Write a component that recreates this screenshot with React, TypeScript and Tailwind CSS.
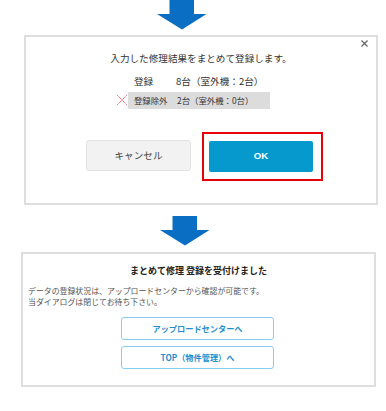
import React from 'react';

const font = { fontFamily: '"Noto Sans CJK JP", "Noto Sans", sans-serif' };

// Blue down arrow between the two dialogs
const DownArrow: React.FC<{ className?: string }> = ({ className }) => (
  <svg className={className} width="50" height="30" viewBox="0 0 50 30">
    <rect x="12.5" y="0" width="24.5" height="14.5" fill="#0a6fc2" />
    <polygon points="0,14 49.5,14 25,29.5" fill="#0a6fc2" />
  </svg>
);

const App: React.FC = () => {
  return (
    <div className="w-[386px] h-[411px] bg-white flex flex-col text-[#333]" style={font}>
      <DownArrow className="ml-[157px] shrink-0" />

      {/* Confirm dialog */}
      <div className="relative mt-[5px] ml-[24px] w-[354px] h-[170px] border-2 border-[#dedede] bg-white flex flex-col">
        <svg className="absolute right-[8px] top-[3px]" width="7" height="7" viewBox="0 0 7 7">
          <path d="M0.5 0.5 L6.5 6.5 M6.5 0.5 L0.5 6.5" stroke="#666" strokeWidth="1.3" />
        </svg>

        <p className="pt-[14px] text-center text-[9.6px] leading-[14px]">入力した修理結果をまとめて登録します。</p>

        <div className="mt-[9px] ml-[102px] flex text-[9.6px] leading-[14px] pl-[6px]">
          <span className="w-[42px]">登録</span>
          <span>8台（室外機：2台）</span>
        </div>

        <div className="relative mt-[4px] ml-[102px] w-[142px] h-[17px] bg-[#dcdcdc] flex items-center pl-[6px] text-[8.4px]">
          <svg className="absolute left-[-11px] top-[3px]" width="10" height="10" viewBox="0 0 10 10">
            <path d="M0.5 0.5 L9.5 9.5 M9.5 0.5 L0.5 9.5" stroke="#e8141b" strokeWidth="1" strokeDasharray="1 1" />
          </svg>
          <span className="w-[43px]">登録除外</span>
          <span>2台（室外機：0台）</span>
        </div>

        <div className="mt-[23px] pl-[60px] flex items-start gap-[11px]">
          <button className="mt-[8px] w-[105px] h-[31px] rounded-[3px] bg-[#f2f2f2] border border-[#e2e2e2] text-[9.6px] text-[#444]">
            キャンセル
          </button>
          <div className="border-2 border-[#e8000b] pl-[5px] pt-[6px] pr-[8px] pb-[7px]">
            <button className="w-[104px] h-[31px] rounded-[2px] bg-[#0699cd] text-white text-[9.6px] font-bold" style={{ fontFamily: '"Liberation Sans", "Noto Sans CJK JP", sans-serif' }}>
              OK
            </button>
          </div>
        </div>
      </div>

      <DownArrow className="mt-[11px] ml-[160px] shrink-0" />

      {/* Accepted dialog */}
      <div className="mt-[6px] ml-[21px] w-[355px] h-[135px] border-2 border-[#dedede] bg-white flex flex-col">
        <p className="pt-[10px] text-center text-[9px] leading-[14px] font-bold text-[#222]">まとめて修理 登録を受付けました</p>
        <div className="mt-[7px] pl-[5px] text-[7.9px] leading-[11px] text-[#555]">
          <p>データの登録状況は、アップロードセンターから確認が可能です。</p>
          <p>当ダイアログは閉じてお待ち下さい。</p>
        </div>
        <div className="mt-[10px] ml-[98px] flex flex-col gap-[6px]">
          <button className="w-[153px] h-[23px] rounded-[3px] border border-[#86cdee] text-[#1f8fcf] text-[8.2px] font-bold bg-white">
            アップロードセンターへ
          </button>
          <button className="w-[153px] h-[23px] rounded-[3px] border border-[#86cdee] text-[#1f8fcf] text-[8.2px] font-bold bg-white">
            TOP（物件管理）へ
          </button>
        </div>
      </div>
    </div>
  );
};

export default App;
